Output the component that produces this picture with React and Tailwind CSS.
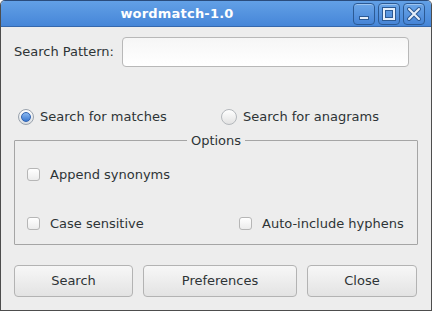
import { useState } from 'react';

const font = { fontFamily: '"DejaVu Sans", sans-serif' };

const TitleButton = ({ children }) => (
    <div className="w-[22px] h-[22px] rounded-[4px] border border-[#2c5a94] bg-gradient-to-b from-[#6ba6e8] to-[#4684d6] shadow-[inset_0_1px_0_rgba(255,255,255,0.35)] flex items-center justify-center">
        <svg width="16" height="16" viewBox="0 0 16 16">
            {children}
        </svg>
    </div>
);

const Radio = ({ checked, onClick, label }) => (
    <label className="flex items-center gap-[6px] cursor-default whitespace-nowrap" onClick={onClick}>
        <span
            className={`w-[16px] h-[16px] rounded-full border flex items-center justify-center ${
                checked
                    ? 'border-[#9aa3ad] bg-gradient-to-b from-[#ffffff] to-[#d9dde2]'
                    : 'border-[#b4b8bc] bg-gradient-to-b from-[#ffffff] to-[#e2e2e2]'
            }`}
        >
            {checked && (
                <span className="w-[10px] h-[10px] rounded-full border border-[#2f62b0] bg-gradient-to-b from-[#8ab8f0] to-[#3a78d0]" />
            )}
        </span>
        <span>{label}</span>
    </label>
);

const Check = ({ checked, onClick, label }) => (
    <label className="flex items-center gap-[10px] cursor-default whitespace-nowrap" onClick={onClick}>
        <span className="w-[13px] h-[13px] rounded-[3px] border border-[#b6b6b6] bg-gradient-to-b from-[#ffffff] to-[#ececec] flex items-center justify-center text-[10px] leading-none">
            {checked ? '✓' : ''}
        </span>
        <span>{label}</span>
    </label>
);

const Button = ({ children, className }) => (
    <button
        className={`h-[32px] rounded-[4px] border border-[#b3b3b3] bg-gradient-to-b from-[#f7f7f7] to-[#e3e3e3] text-[#2e3436] text-[13px] ${className}`}
    >
        {children}
    </button>
);

const App = () => {
    const [mode, setMode] = useState('matches');
    const [opts, setOpts] = useState({ syn: false, cs: false, hy: false });
    const toggle = (k) => setOpts({ ...opts, [k]: !opts[k] });

    return (
        <div
            className="w-[432px] h-[311px] flex flex-col bg-[#ededed] text-[#2e3436] text-[13px] rounded-t-[5px] border border-[#4d4d4d] border-t-[#2a4c7c] overflow-hidden"
            style={font}
        >
            <div className="h-[26px] shrink-0 flex items-center bg-gradient-to-b from-[#62a0e6] to-[#4686d8] border-b border-[#3568ad]">
                <div className="flex-1 text-center text-white font-bold text-[13px] tracking-[0.2px]">
                    wordmatch-1.0
                </div>
                <div className="flex gap-[3px] pr-[6px]">
                    <TitleButton>
                        <rect x="3.5" y="10.5" width="9" height="3" fill="#e6effa" stroke="#2c5a94" strokeWidth="1" />
                    </TitleButton>
                    <TitleButton>
                        <rect x="3" y="3" width="10" height="10" fill="none" stroke="#2c5a94" strokeWidth="4" />
                        <rect x="3" y="3" width="10" height="10" fill="none" stroke="#e6effa" strokeWidth="2" />
                    </TitleButton>
                    <TitleButton>
                        <path d="M3 3 L13 13 M13 3 L3 13" stroke="#2c5a94" strokeWidth="4" strokeLinecap="round" />
                        <path d="M3 3 L13 13 M13 3 L3 13" stroke="#e6effa" strokeWidth="2" strokeLinecap="round" />
                    </TitleButton>
                </div>
            </div>

            <div className="flex-1 flex flex-col px-[13px]">
                <div className="flex items-center mt-[10px] pr-[9px]">
                    <span className="w-[108px]">Search Pattern:</span>
                    <input
                        className="flex-1 h-[30px] rounded-[4px] border border-[#b8b8b8] bg-gradient-to-b from-[#f6f6f6] to-[#ffffff] outline-none px-[6px]"
                        style={font}
                    />
                </div>

                <div className="flex items-center mt-[40px] pl-[4px]">
                    <div className="w-[203px]">
                        <Radio checked={mode === 'matches'} onClick={() => setMode('matches')} label="Search for matches" />
                    </div>
                    <Radio checked={mode === 'anagrams'} onClick={() => setMode('anagrams')} label="Search for anagrams" />
                </div>

                <fieldset className="mt-[6px] h-[112px] border border-[#a5a5a5] rounded-[1px] px-[12px]">
                    <legend className="mx-auto px-[4px] leading-[15px]">Options</legend>
                    <div className="flex flex-col gap-[30px] mt-[17px]">
                        <Check checked={opts.syn} onClick={() => toggle('syn')} label="Append synonyms" />
                        <div className="flex items-center">
                            <div className="w-[212px]">
                                <Check checked={opts.cs} onClick={() => toggle('cs')} label="Case sensitive" />
                            </div>
                            <Check checked={opts.hy} onClick={() => toggle('hy')} label="Auto-include hyphens" />
                        </div>
                    </div>
                </fieldset>

                <div className="flex gap-[10px] mt-[20px] pr-[1px]">
                    <Button className="w-[119px]">Search</Button>
                    <Button className="w-[154px]">Preferences</Button>
                    <Button className="flex-1">Close</Button>
                </div>
            </div>
        </div>
    );
};

export default App;
